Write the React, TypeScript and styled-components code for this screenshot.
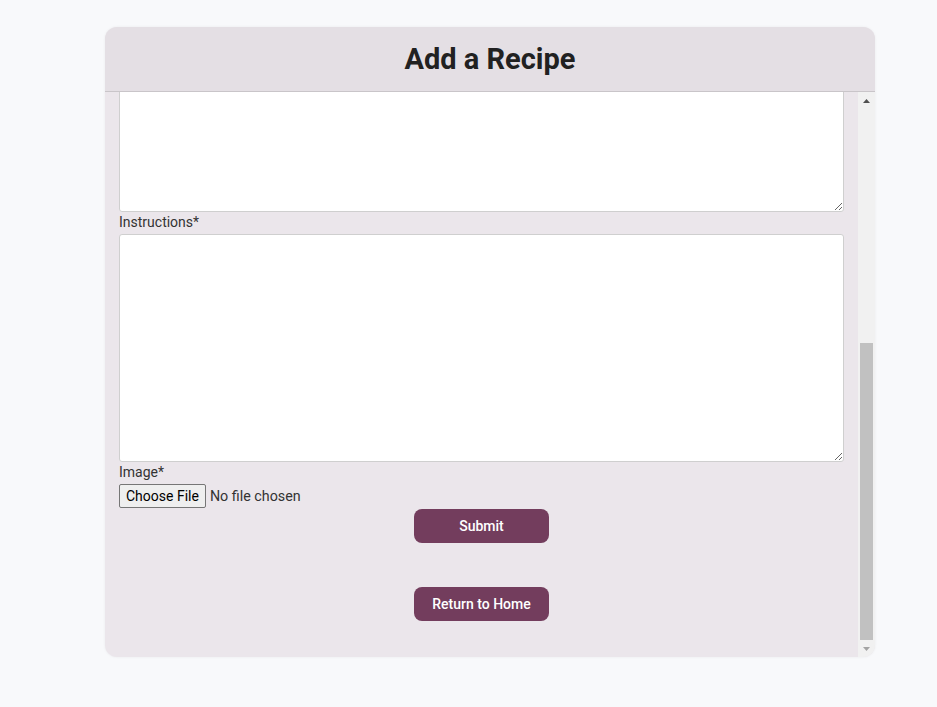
import React, { useEffect, useRef } from "react";
import styled, { createGlobalStyle } from "styled-components";

const GlobalStyle = createGlobalStyle`
  html, body {
    margin: 0;
    padding: 0;
    background: #f8f9fb;
    font-family: Roboto, "Noto Sans", Arial, sans-serif;
  }
  * { box-sizing: border-box; }
`;

const Page = styled.div`
  padding-top: 27px;
  padding-left: 105px;
  height: 707px;
`;

const Card = styled.div`
  width: 770px;
  border-radius: 12px;
  background: #ebe6eb;
  box-shadow: 0 0 3px rgba(0, 0, 0, 0.06);
  overflow: hidden;
`;

const Header = styled.div`
  height: 65px;
  background: #e4dfe4;
  border-bottom: 1px solid #c9c5c9;
  display: flex;
  align-items: center;
  justify-content: center;
`;

const Title = styled.h1`
  margin: 0;
  font-size: 29px;
  font-weight: 700;
  color: #212121;
`;

const Body = styled.div`
  height: 565px;
  display: flex;
`;

const Scroller = styled.div`
  flex: 1;
  min-width: 0;
  overflow: hidden;
`;

const Scrollbar = styled.div`
  width: 17px;
  flex: none;
  display: flex;
  flex-direction: column;
  background: #f1f1f1;
`;

const ArrowButton = styled.div`
  height: 17px;
  flex: none;
  display: flex;
  align-items: center;
  justify-content: center;
`;

const Track = styled.div`
  flex: 1;
  display: flex;
  flex-direction: column;
  justify-content: flex-end;
  padding: 0 2px;
`;

const Thumb = styled.div`
  height: 297px;
  background: #c1c1c1;
`;

const Form = styled.form`
  display: flex;
  flex-direction: column;
  padding: 14px 14px 36px 14px;
`;

const Label = styled.label`
  font-size: 14px;
  line-height: 20px;
  padding-bottom: 2px;
  color: #333;
`;

const TextInput = styled.input`
  width: 100%;
  height: 30px;
  border: 1px solid #cfcfcf;
  border-radius: 3px;
  background: #fff;
`;

const TextArea = styled.textarea<{ $h: number }>`
  width: 100%;
  height: ${(p) => p.$h}px;
  border: 1px solid #cfcfcf;
  border-radius: 3px;
  background: #fff;
  display: block;
  margin: 0;
  font-family: inherit;
`;

const FileInput = styled.input`
  font-family: Roboto, Arial, sans-serif;
  font-size: 14.3px;
  color: #333;
  height: 25px;

  &::file-selector-button {
    font-family: Roboto, Arial, sans-serif;
    font-size: 14px;
    height: 24px;
    padding: 0 6px;
    margin-right: 4px;
    border: 1px solid #767676;
    border-radius: 2px;
    background: #efefef;
    color: #000;
  }
`;

const Actions = styled.div`
  display: flex;
  flex-direction: column;
  align-items: center;
  gap: 44px;
`;

const Button = styled.button`
  width: 135px;
  height: 34px;
  border: none;
  border-radius: 8px;
  background: #733d5d;
  color: #fff;
  font-family: Roboto, Arial, sans-serif;
  font-size: 14px;
  font-weight: 500;
  cursor: pointer;
`;

const Arrow = ({ dir, color }: { dir: "up" | "down"; color: string }) => (
  <svg width="7" height="4" viewBox="0 0 7 4">
    <path d={dir === "up" ? "M0 4 L3.5 0 L7 4 Z" : "M0 0 L3.5 4 L7 0 Z"} fill={color} />
  </svg>
);

export default function App() {
  const ref = useRef<HTMLDivElement>(null);
  useEffect(() => {
    if (ref.current) ref.current.scrollTop = ref.current.scrollHeight;
  }, []);
  return (
    <>
      <GlobalStyle />
      <Page>
        <Card>
          <Header>
            <Title>Add a Recipe</Title>
          </Header>
          <Body>
            <Scroller ref={ref}>
              <Form onSubmit={(e) => e.preventDefault()}>
                <Label>Recipe Name*</Label>
                <TextInput type="text" />
                <Label>Description*</Label>
                <TextArea $h={228} />
                <Label>Ingredients*</Label>
                <TextArea $h={228} />
                <Label>Instructions*</Label>
                <TextArea $h={228} />
                <Label>Image*</Label>
                <FileInput type="file" />
                <Actions>
                  <Button type="submit">Submit</Button>
                  <Button type="button">Return to Home</Button>
                </Actions>
              </Form>
            </Scroller>
            <Scrollbar>
              <ArrowButton>
                <Arrow dir="up" color="#505050" />
              </ArrowButton>
              <Track>
                <Thumb />
              </Track>
              <ArrowButton>
                <Arrow dir="down" color="#a3a3a3" />
              </ArrowButton>
            </Scrollbar>
          </Body>
        </Card>
      </Page>
    </>
  );
}
